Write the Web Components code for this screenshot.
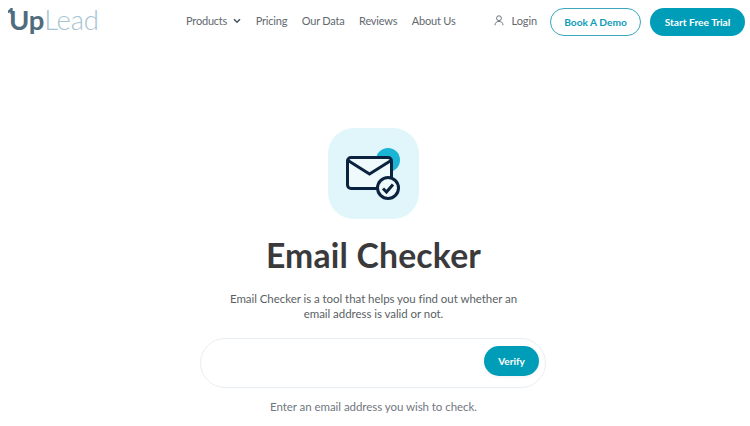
<!DOCTYPE html>
<html>
<head>
<meta charset="utf-8">
<title>Email Checker</title>
<style>
html,body{margin:0;padding:0;background:#fff;}
body{font-family:"Lato","Liberation Sans",sans-serif;width:750px;height:426px;overflow:hidden;}
</style>
</head>
<body>
<site-header></site-header>
<checker-hero>
  <span slot="title">Email Checker</span>
  <span slot="desc">Email Checker is a tool that helps you find out whether an<br>email address is valid or not.</span>
  <span slot="hint">Enter an email address you wish to check.</span>
</checker-hero>
<script>
class SiteHeader extends HTMLElement{
    constructor(){
        super();
        this.attachShadow({ mode: "open" });
    }
    connectedCallback(){
        this.shadowRoot.innerHTML = `
        <style>
        :host{display:flex;align-items:center;height:44px;padding:0 5px 0 9px;color:#62696f;font-size:11px;white-space:nowrap;}
        .logo{flex:none;display:flex;align-items:baseline;position:relative;width:177px;font-size:27.500px;line-height:44px;letter-spacing:-.2px;margin-top:-4px;}
        .logo b{color:#4f6b7e;font-weight:700;}
        .logo span{color:#a6c4d1;font-weight:300;}
        .logo svg{position:absolute;left:-1px;top:10px;}
        nav{flex:none;display:flex;align-items:center;gap:14.500px;letter-spacing:-.2px;margin-top:-3px;}
        nav a{display:flex;align-items:center;gap:6px;}
        .login{flex:none;display:flex;align-items:center;gap:8px;margin-left:auto;letter-spacing:-.1px;margin-top:-3px;}
        .btn{flex:none;display:flex;align-items:center;justify-content:center;box-sizing:border-box;height:28px;border-radius:14px;font-weight:700;font-size:10.200px;}
        .demo{width:91px;margin-left:13px;border:1px solid #3ba6bc;color:#0e9cb8;}
        .trial{width:95px;margin-left:9px;background:#009db9;color:#fff;}
        </style>
        <div class="logo"><svg width="6" height="6" viewBox="0 0 6 6"><path d="M0 4.500 3.500 1V6" fill="none" stroke="#4f6b7e" stroke-width="2.400"/></svg><b>Up</b><span>Lead</span></div>
        <nav>
          <a>Products
            <svg width="8" height="6" viewBox="0 0 8 6"><path d="M1 1.200 4 4.200 7 1.200" fill="none" stroke="#4a5560" stroke-width="1.600"/></svg>
          </a>
          <a>Pricing</a>
          <a>Our Data</a>
          <a>Reviews</a>
          <a>About Us</a>
        </nav>
        <div class="login">
          <svg width="10" height="11" viewBox="0 0 10 11" fill="none" stroke="#6b747c" stroke-width="1"><circle cx="5" cy="3.200" r="2.400"/><path d="M1 10.200C1 7.800 2.600 6.400 5 6.400S9 7.800 9 10.200"/></svg>
          <span>Login</span>
        </div>
        <a class="btn demo">Book A Demo</a>
        <a class="btn trial">Start Free Trial</a>
        `;
    }
}
window.customElements.define("site-header", SiteHeader);

class MailBadge extends HTMLElement{
    constructor(){
        super();
        this.attachShadow({ mode: "open" });
    }
    connectedCallback(){
        this.shadowRoot.innerHTML = `
        <style>
        :host{display:block;width:91px;height:91px;}
        svg{display:block;}
        </style>
        <svg width="91" height="91" viewBox="0 0 91 91">
          <rect width="91" height="91" rx="26" fill="#e0f6fa"/>
          <circle cx="60" cy="32" r="12" fill="#1ab4d4"/>
          <rect x="19.500" y="29.500" width="44" height="31" rx="3.500" fill="#eefafc" stroke="#0c2340" stroke-width="3"/>
          <path d="M20 32.500 41.500 46 63 32.500" fill="none" stroke="#0c2340" stroke-width="3"/>
          <circle cx="60" cy="60" r="10.500" fill="#eefafc" stroke="#0c2340" stroke-width="3"/>
          <path d="M55 60.500 58.500 64 65 56.500" fill="none" stroke="#0c2340" stroke-width="3"/>
        </svg>
        `;
    }
}
window.customElements.define("mail-badge", MailBadge);

class VerifyBox extends HTMLElement{
    constructor(){
        super();
        this.attachShadow({ mode: "open" });
    }
    connectedCallback(){
        this.shadowRoot.innerHTML = `
        <style>
        :host{display:flex;align-items:center;justify-content:flex-end;box-sizing:border-box;width:346px;height:50px;padding:0 6px 4px 0;border:1px solid #e9eef2;border-radius:25px;background:#fff;}
        .go{display:flex;align-items:center;justify-content:center;width:55px;height:30px;border-radius:15px;background:#009db9;color:#fff;font-weight:700;font-size:10px;box-shadow:0 1px 4px rgba(0,0,0,.06);}
        </style>
        <span class="go">Verify</span>
        `;
    }
}
window.customElements.define("verify-box", VerifyBox);

class CheckerHero extends HTMLElement{
    constructor(){
        super();
        this.attachShadow({ mode: "open" });
    }
    connectedCallback(){
        this.shadowRoot.innerHTML = `
        <style>
        :host{display:flex;flex-direction:column;align-items:center;padding:84px 3px 0 0;}
        h1{margin:15px 0 0;font-size:33.700px;line-height:42px;font-weight:700;color:#3a3a3c;letter-spacing:.2px;}
        p{margin:15px 0 0;font-size:11.500px;line-height:15px;color:#5b5f66;text-align:center;letter-spacing:-.05px;}
        verify-box{margin:17px 1px 0 0;}
        .hint{margin-top:11px;font-size:11.500px;line-height:16px;color:#71777f;letter-spacing:-.05px;}
        </style>
        <mail-badge></mail-badge>
        <h1><slot name="title"></slot></h1>
        <p><slot name="desc"></slot></p>
        <verify-box></verify-box>
        <div class="hint"><slot name="hint"></slot></div>
        `;
    }
}
window.customElements.define("checker-hero", CheckerHero);
</script>
</body>
</html>
